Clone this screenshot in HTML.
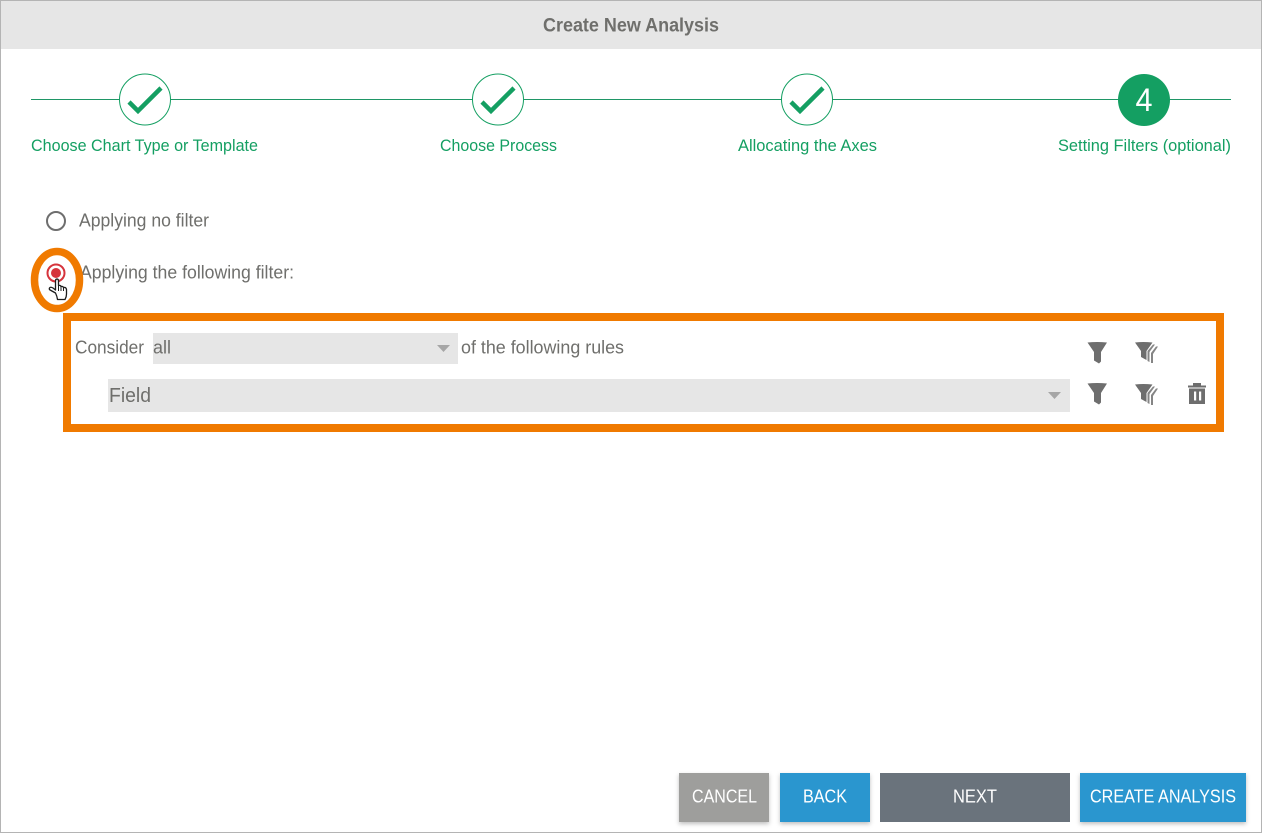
<!DOCTYPE html>
<html><head><meta charset="utf-8"><title>Create New Analysis</title>
<style>
html,body{margin:0;padding:0;background:#fff;width:1262px;height:833px;overflow:hidden}
svg{display:block}
text{font-family:"Liberation Sans",sans-serif;font-size:17px;fill:#6f6f6c}
.g{fill:#149f62}
.w{fill:#fff}
</style></head><body>
<svg width="1262" height="833" viewBox="0 0 1262 833" xmlns="http://www.w3.org/2000/svg">
<defs><filter id="s" x="-10%" y="-10%" width="120%" height="130%"><feDropShadow dx="0" dy="2" stdDeviation="2" flood-color="#000" flood-opacity=".25"/></filter></defs>
<rect width="1262" height="833" fill="#fff"/>
<rect x="1" y="1" width="1260" height="48" fill="#e6e6e6"/>
<rect x=".5" y=".5" width="1261" height="832" fill="none" stroke="#b4b4b4"/>
<text x="543" y="31.500" style="font-size:19px;font-weight:bold" textLength="176" lengthAdjust="spacingAndGlyphs">Create New Analysis</text>

<rect x="31" y="99" width="1200" height="1" fill="#1f9666"/>
<g fill="#fff" stroke="#149f62" stroke-width="1">
<circle cx="145" cy="99.500" r="25.500"/><circle cx="498" cy="99.500" r="25.500"/><circle cx="807" cy="99.500" r="25.500"/>
</g>
<circle cx="1144" cy="100" r="26" fill="#149f62"/>
<g fill="none" stroke="#149f62" stroke-width="4.500">
<path d="M129 102l9 9 23-23"/><path d="M482 102l9 9 23-23"/><path d="M791 102l9 9 23-23"/>
</g>
<text x="1135.500" y="111" class="w" style="font-size:32px" textLength="17" lengthAdjust="spacingAndGlyphs">4</text>
<text class="g" x="31" y="151" textLength="227" lengthAdjust="spacingAndGlyphs">Choose Chart Type or Template</text>
<text class="g" x="440" y="151" textLength="117" lengthAdjust="spacingAndGlyphs">Choose Process</text>
<text class="g" x="738" y="151" textLength="139" lengthAdjust="spacingAndGlyphs">Allocating the Axes</text>
<text class="g" x="1058" y="151" textLength="173" lengthAdjust="spacingAndGlyphs">Setting Filters (optional)</text>

<circle cx="56" cy="221" r="9" fill="#fff" stroke="#6e6e6e" stroke-width="2"/>
<text x="79" y="226.500" style="font-size:18px" textLength="130" lengthAdjust="spacingAndGlyphs">Applying no filter</text>
<text x="80" y="278.500" style="font-size:18px" textLength="214" lengthAdjust="spacingAndGlyphs">Applying the following filter:</text>

<ellipse cx="57" cy="280" rx="22.500" ry="28.500" fill="#fff" stroke="#f07a00" stroke-width="7.500"/>
<circle cx="56" cy="273" r="8.500" fill="#fff" stroke="#d6343c" stroke-width="2"/>
<circle cx="56" cy="273" r="5" fill="#d6343c"/>
<path d="M55.500 293L51 290.500Q48.500 289.500 49.500 288Q50.500 286.500 53 288L55.500 290V281Q55.500 279 57 279Q58.500 279 58.500 281V285.500Q60.500 285 61 286.500Q62.800 286 63.500 287.500Q66 287 66.500 289.500V294Q66.500 297 65 299.500H57.500Q57 296 55.500 293Z" fill="#fff" stroke="#1c1c1c" stroke-width="1.300" stroke-linejoin="round"/>
<path d="M58.500 285.500V291M61 286.500V291M63.500 287.500V291" stroke="#1c1c1c" stroke-width="1" fill="none"/>

<rect x="67" y="317" width="1153" height="111" fill="none" stroke="#f07a00" stroke-width="8"/>
<text x="75" y="353.500" textLength="69" lengthAdjust="spacingAndGlyphs" style="font-size:18px">Consider</text>
<rect x="153" y="333" width="305" height="31" fill="#e6e6e6"/>
<text x="153" y="353.500" textLength="18" lengthAdjust="spacingAndGlyphs" style="font-size:18px">all</text>
<path d="M437 345h13l-6.500 7z" fill="#a6a6a6"/>
<text x="461" y="353.500" textLength="163" lengthAdjust="spacingAndGlyphs" style="font-size:18px">of the following rules</text>

<rect x="108" y="379" width="962" height="33" fill="#e6e6e6"/>
<text x="109" y="402" textLength="42" lengthAdjust="spacingAndGlyphs" style="font-size:20px">Field</text>
<path d="M1048 392h13l-6.500 7z" fill="#a6a6a6"/>

<g fill="#6e6e6e">
<path d="M1087.500 342.500Q1097 341.500 1107 342.500L1101 352V361.500L1099 363.500L1094 360.500V352Z"/>
<path d="M1087.500 383.500Q1097 382.500 1107 383.500L1101 393V402.500L1099 404.500L1094 401.500V393Z"/>
<g id="m">
<path d="M1135 342.500Q1143 341.500 1152.500 342.500L1146.500 351V360L1141 357V351Z"/>
<path d="M1147.500 361V351L1153 344.500H1155L1149.500 352V362Z" fill="#858585"/>
<path d="M1151 363V353L1156 346.500H1158L1153 354V363Z" fill="#858585"/>
</g>
<path d="M1135 384.500Q1143 383.500 1152.500 384.500L1146.500 393V402L1141 399V393Z"/>
<path d="M1147.500 403V393L1153 386.500H1155L1149.500 394V404Z" fill="#858585"/>
<path d="M1151 405V395L1156 388.500H1158L1153 396V405Z" fill="#858585"/>
<path fill-rule="evenodd" d="M1188 385.500h5v-2.500h8v2.500h5v2h-18zM1189 388.500h16v15.500h-16zM1194 391.500v9h2.200v-9zM1199 391.500v9h2.200v-9z"/>
</g>

<g filter="url(#s)">
<rect x="679" y="773" width="90" height="49" fill="#9e9e9c"/>
<rect x="780" y="773" width="90" height="49" fill="#2a96cf"/>
<rect x="1080" y="773" width="166" height="49" fill="#2a96cf"/>
</g>
<rect x="880" y="773" width="190" height="49" fill="#6a737c"/>
<text class="w" x="692" y="802.500" textLength="65" lengthAdjust="spacingAndGlyphs" style="font-size:18px">CANCEL</text>
<text class="w" x="803" y="802.500" textLength="44" lengthAdjust="spacingAndGlyphs" style="font-size:18px">BACK</text>
<text class="w" x="953" y="802.500" textLength="44" lengthAdjust="spacingAndGlyphs" style="font-size:18px">NEXT</text>
<text class="w" x="1090" y="802.500" textLength="146" lengthAdjust="spacingAndGlyphs" style="font-size:18px">CREATE ANALYSIS</text>
</svg>
</body></html>
